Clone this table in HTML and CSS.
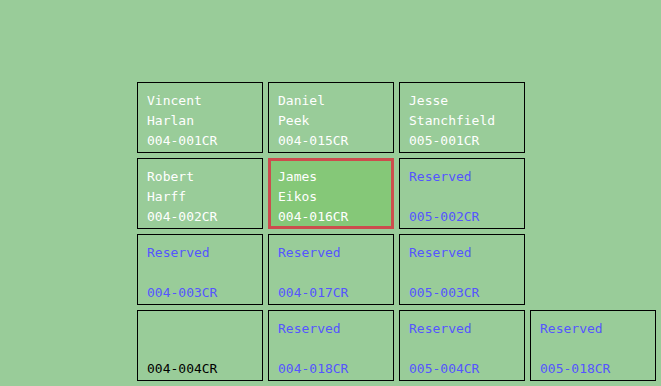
FILE: index.html
```html
<!DOCTYPE html>
<html lang="en">

<head>
    <meta charset="UTF-8">
    <title>Room Assignments</title>
    <link rel="stylesheet" href="styles.css">
</head>

<body>
    <div class="board">
        <!-- column 004-001 .. 004-004 -->
        <div class="room">
            <span>Vincent</span>
            <span>Harlan</span>
            <span>004-001CR</span>
        </div>
        <div class="room">
            <span>Robert</span>
            <span>Harff</span>
            <span>004-002CR</span>
        </div>
        <div class="room reserved">
            <span>Reserved</span>
            <span></span>
            <span>004-003CR</span>
        </div>
        <div class="room vacant">
            <span></span>
            <span></span>
            <span>004-004CR</span>
        </div>

        <!-- column 004-015 .. 004-018 -->
        <div class="room">
            <span>Daniel</span>
            <span>Peek</span>
            <span>004-015CR</span>
        </div>
        <div class="room selected">
            <span>James</span>
            <span>Eikos</span>
            <span>004-016CR</span>
        </div>
        <div class="room reserved">
            <span>Reserved</span>
            <span></span>
            <span>004-017CR</span>
        </div>
        <div class="room reserved">
            <span>Reserved</span>
            <span></span>
            <span>004-018CR</span>
        </div>

        <!-- column 005-001 .. 005-004 -->
        <div class="room">
            <span>Jesse</span>
            <span>Stanchfield</span>
            <span>005-001CR</span>
        </div>
        <div class="room reserved">
            <span>Reserved</span>
            <span></span>
            <span>005-002CR</span>
        </div>
        <div class="room reserved">
            <span>Reserved</span>
            <span></span>
            <span>005-003CR</span>
        </div>
        <div class="room reserved">
            <span>Reserved</span>
            <span></span>
            <span>005-004CR</span>
        </div>

        <!-- last column only has 005-018 -->
        <div class="slot"></div>
        <div class="slot"></div>
        <div class="slot"></div>
        <div class="room reserved">
            <span>Reserved</span>
            <span></span>
            <span>005-018CR</span>
        </div>
    </div>
</body>

</html>
```

FILE: styles.css
```css
body {
    margin: 0;
    padding: 0;
    background-color: #99cc99;
    font-family: 'DejaVu Sans Mono', 'Liberation Mono', monospace;
    font-size: 13px;
    color: #fff;
}

.board {
    display: grid;
    grid-template-columns: repeat(4, 126px);
    grid-template-rows: repeat(4, 71px);
    grid-auto-flow: column;
    gap: 5px;
    padding: 82px 0 0 137px;
}

.room {
    box-sizing: border-box;
    display: flex;
    flex-direction: column;
    padding: 8px 8px 0 9px;
    border: 1px solid #000;
}

.room span {
    height: 20px;
    line-height: 20px;
    white-space: nowrap;
}

.room.reserved {
    color: #5555ff;
}

.room.vacant {
    color: #000;
}

/* currently picked room */
.room.selected {
    border: 3px solid #cc4d4d;
    background-color: #85c878;
    padding: 6px 6px 0 7px;
}
```
